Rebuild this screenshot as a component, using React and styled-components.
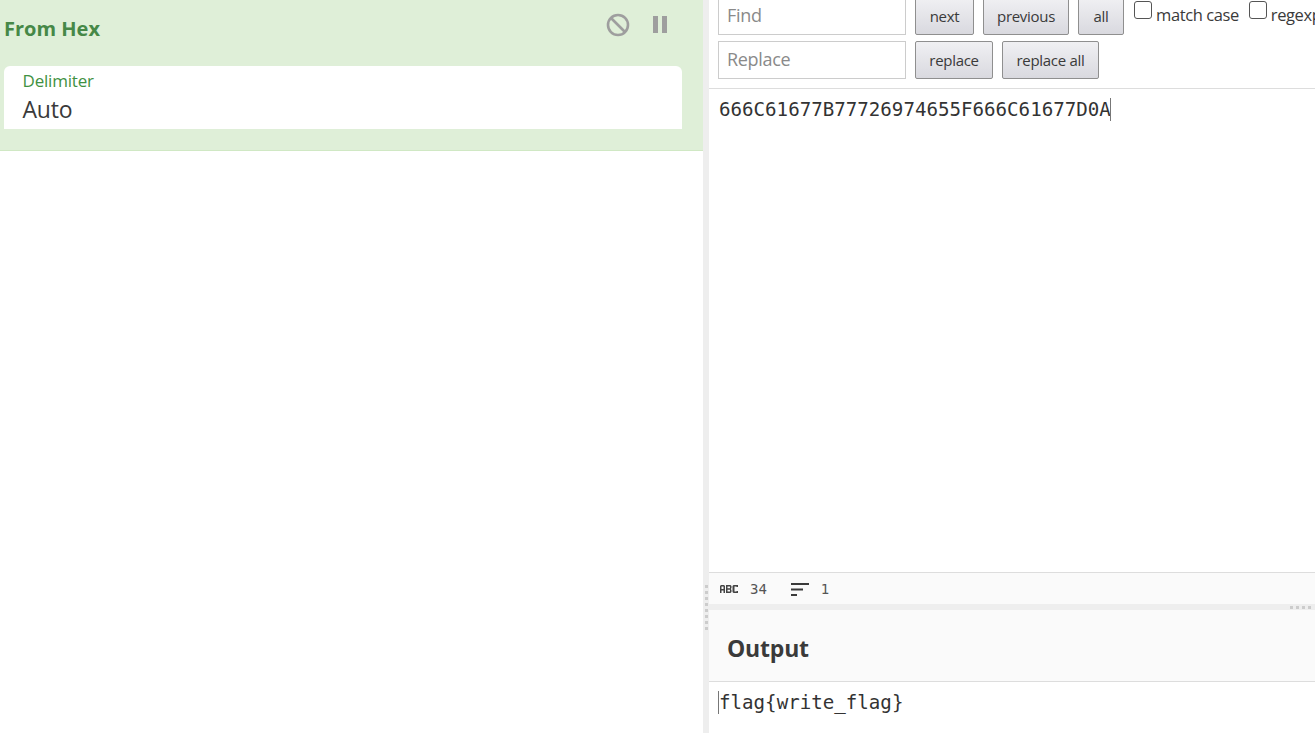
import React from "react";
import styled, { createGlobalStyle } from "styled-components";

const Global = createGlobalStyle`
  html, body { margin: 0; padding: 0; background: #fff; }
  body { font-family: "Open Sans", "Noto Sans", sans-serif; color: #3a3a3a; }
`;

export default function App() {
  return (
    <Page>
      <Global />
      <RecipePane>
        <Operation>
          <OpHeader>
            <OpTitle>From Hex</OpTitle>
            <OpIcons>
              <svg width="24" height="24" viewBox="0 0 24 24" fill="none" stroke="#9e9e9e" strokeWidth="2.6">
                <circle cx="12" cy="12" r="10" />
                <path d="M5 5l14 14" />
              </svg>
              <svg width="16" height="18" viewBox="0 0 16 18" fill="#9e9e9e">
                <rect x="1" y="0" width="5" height="17" />
                <rect x="10" y="0" width="5" height="17" />
              </svg>
            </OpIcons>
          </OpHeader>
          <Field>
            <FieldLabel>Delimiter</FieldLabel>
            <FieldValue>Auto</FieldValue>
          </Field>
        </Operation>
      </RecipePane>
      <VSplitter>
        <VGrip />
      </VSplitter>
      <IoPane>
        <SearchPanel>
          <SearchRow>
            <SearchInput placeholder="Find" />
            <SearchButton $width={59}>next</SearchButton>
            <SearchButton $width={86}>previous</SearchButton>
            <SearchButton $width={46}>all</SearchButton>
            <CheckLabel><CheckBox />match case</CheckLabel>
            <CheckLabel><CheckBox />regexp</CheckLabel>
          </SearchRow>
          <SearchRow>
            <SearchInput placeholder="Replace" />
            <SearchButton $width={78}>replace</SearchButton>
            <SearchButton $width={97}>replace all</SearchButton>
          </SearchRow>
        </SearchPanel>
        <InputEditor>
          <MonoLine>666C61677B77726974655F666C61677D0A<Caret /></MonoLine>
        </InputEditor>
        <StatusBar>
          <StatusItem>
            <svg width="20" height="8" viewBox="0 0 20 8" fill="#444">
              <path fillRule="evenodd" d="M1 8V1l1-1h3l1 1v7H4.500V5.500h-2V8zM2.500 1.500v2.500h2V1.500zM7 0h4.500l1 1v2l-.7 1 .7 1v2l-1 1H7zm1.500 1.500v1.700h2.500V1.500zm0 3.300v1.700h2.500V4.800zM14.500 0H19v2h-1.500V1.500h-2v5h2V6H19v2h-4.500l-1-1V1z" />
            </svg>
            <StatusText>34</StatusText>
          </StatusItem>
          <StatusItem>
            <svg width="20" height="16" viewBox="0 0 20 16" stroke="#3a3a3a" strokeWidth="2">
              <path d="M1 3h18M1 8.500h12M1 14h6" />
            </svg>
            <StatusText>1</StatusText>
          </StatusItem>
        </StatusBar>
        <HSplitter>
          <HGrip />
        </HSplitter>
        <OutputHeader>Output</OutputHeader>
        <OutputEditor>
          <MonoLine><Caret />flag{"{"}write_flag{"}"}</MonoLine>
        </OutputEditor>
      </IoPane>
    </Page>
  );
}

const Page = styled.div`
  display: flex;
  width: 1315px;
  height: 733px;
  overflow: hidden;
`;
const RecipePane = styled.div`
  width: 703px;
  flex: none;
`;
const Operation = styled.div`
  height: 151px;
  box-sizing: border-box;
  background: #dfefd8;
  border-bottom: 1px solid #d0e8c4;
  padding: 0 21px 0 4px;
`;
const OpHeader = styled.div`
  height: 66px;
  display: flex;
  justify-content: space-between;
  align-items: flex-start;
`;
const OpTitle = styled.div`
  margin-top: 15px;
  font-size: 20px;
  line-height: 28px;
  font-weight: 700;
  letter-spacing: 0;
  color: #468847;
`;
const OpIcons = styled.div`
  display: flex;
  align-items: center;
  gap: 22px;
  margin: 13px 14px 0 0;
`;
const Field = styled.div`
  height: 63px;
  box-sizing: border-box;
  background: #fff;
  border-radius: 6px 6px 0 0;
  padding: 2px 19px 0 18.500px;
`;
const FieldLabel = styled.div`
  font-size: 17px;
  line-height: 26px;
  letter-spacing: -0.2px;
  color: #3f9142;
`;
const FieldValue = styled.div`
  font-size: 23px;
  line-height: 31px;
  letter-spacing: -0.2px;
  color: #3a3a3a;
`;
const VSplitter = styled.div`
  position: relative;
  width: 6px;
  flex: none;
  background: #eee;
`;
const VGrip = styled.div`
  position: absolute;
  left: 2px;
  top: 585px;
  width: 3px;
  height: 46px;
  background: repeating-linear-gradient(to bottom, #ccc 0 3px, transparent 3px 6px);
`;
const IoPane = styled.div`
  flex: 1;
  min-width: 0;
  display: flex;
  flex-direction: column;
`;
const SearchPanel = styled.div`
  height: 89px;
  box-sizing: border-box;
  border-bottom: 1px solid #ddd;
  padding: 0 0 0 9px;
  overflow: hidden;
`;
const SearchRow = styled.div`
  display: flex;
  align-items: flex-start;
  gap: 9px;
  height: 38px;
  margin-bottom: 6px;
  white-space: nowrap;
  &:first-child {
    margin-top: -3px;
  }
`;
const SearchInput = styled.input`
  flex: none;
  width: 188px;
  height: 38px;
  box-sizing: border-box;
  border: 1px solid #ccc;
  padding: 0 8px 2px;
  font: 18px "Open Sans", sans-serif;
  letter-spacing: -0.3px;
  outline: none;
  &::placeholder {
    color: #8a8a8a;
  }
`;
const SearchButton = styled.button`
  flex: none;
  width: ${(p) => p.$width}px;
  height: 38px;
  padding: 0 0 1px;
  box-sizing: border-box;
  border: 1px solid #8f8f8f;
  border-radius: 2px;
  background: linear-gradient(to bottom, #f0f0f3, #d9d9df);
  font: 15px "Open Sans", sans-serif;
  letter-spacing: -0.3px;
  color: #3a3a3a;
`;
const CheckLabel = styled.label`
  flex: none;
  display: flex;
  align-items: center;
  gap: 4px;
  height: 34px;
  margin-left: 1px;
  font-size: 16.500px;
  letter-spacing: -0.4px;
  color: #3a3a3a;
`;
const CheckBox = styled.span`
  flex: none;
  width: 18px;
  height: 18px;
  box-sizing: border-box;
  margin-top: -8px;
  border: 1px solid #555;
  border-radius: 3px;
  background: #fff;
`;
const InputEditor = styled.div`
  height: 483px;
  flex: none;
  padding: 8px 0 0 10px;
  box-sizing: border-box;
`;
const MonoLine = styled.div`
  display: flex;
  align-items: center;
  font-family: "DejaVu Sans Mono", "Liberation Mono", monospace;
  font-size: 19.150px;
  line-height: 25px;
  color: #333;
`;
const Caret = styled.span`
  display: inline-block;
  width: 1px;
  height: 23px;
  margin-left: -1px;
  background: #777;
`;
const StatusBar = styled.div`
  height: 32px;
  flex: none;
  box-sizing: border-box;
  display: flex;
  align-items: center;
  gap: 23px;
  padding-left: 10px;
  border-top: 1px solid #ddd;
  background: #fafafa;
`;
const StatusItem = styled.div`
  display: flex;
  align-items: center;
  gap: 11px;
`;
const StatusText = styled.span`
  font-family: "DejaVu Sans Mono", monospace;
  font-size: 14px;
  color: #555;
`;
const HSplitter = styled.div`
  position: relative;
  height: 6px;
  flex: none;
  background: #eee;
`;
const HGrip = styled.div`
  position: absolute;
  right: 3px;
  top: 2px;
  width: 22px;
  height: 3px;
  background: repeating-linear-gradient(to right, #ccc 0 3px, transparent 3px 6px);
`;
const OutputHeader = styled.div`
  height: 72px;
  flex: none;
  box-sizing: border-box;
  display: flex;
  align-items: center;
  padding: 4px 0 0 18px;
  border-bottom: 1px solid #ddd;
  background: #fafafa;
  font-size: 23px;
  font-weight: 700;
  letter-spacing: -0.2px;
  color: #3a3a3a;
`;
const OutputEditor = styled.div`
  flex: 1;
  padding: 8px 0 0 10px;
`;
